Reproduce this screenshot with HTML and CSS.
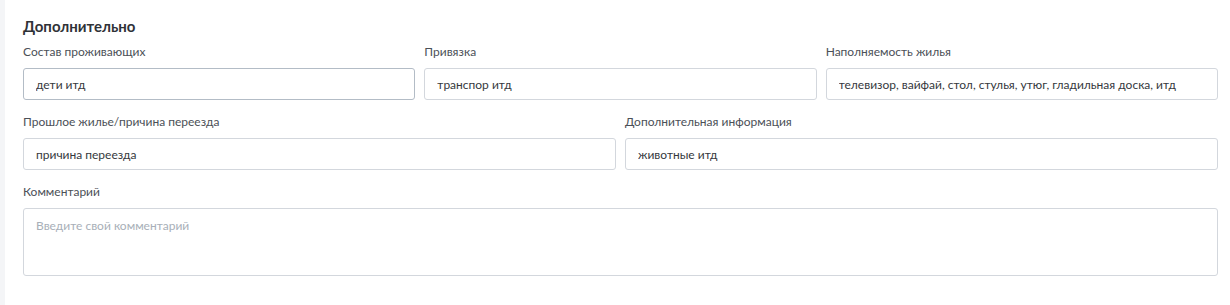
FILE: index.html
```html
<!DOCTYPE html>
<html lang="ru">
<head>
    <meta charset="UTF-8">
    <meta name="viewport" content="width=device-width, initial-scale=1.0">
    <title>Дополнительно</title>
    <link rel="stylesheet" href="styles.css">
</head>
<body>
    <div class="page">
        <section class="panel">
            <h2 class="panel-title">Дополнительно</h2>

            <div class="row row-3">
                <div class="field">
                    <label for="residents">Состав проживающих</label>
                    <input type="text" id="residents" class="control control-active" value="дети итд">
                </div>
                <div class="field">
                    <label for="binding">Привязка</label>
                    <input type="text" id="binding" class="control" value="транспор итд">
                </div>
                <div class="field">
                    <label for="filling">Наполняемость жилья</label>
                    <input type="text" id="filling" class="control" value="телевизор, вайфай, стол, стулья, утюг, гладильная доска, итд">
                </div>
            </div>

            <div class="row row-2">
                <div class="field">
                    <label for="previous">Прошлое жилье/причина переезда</label>
                    <input type="text" id="previous" class="control" value="причина переезда">
                </div>
                <div class="field">
                    <label for="extra">Дополнительная информация</label>
                    <input type="text" id="extra" class="control" value="животные итд">
                </div>
            </div>

            <div class="row">
                <div class="field">
                    <label for="comment">Комментарий</label>
                    <textarea id="comment" class="control control-area" placeholder="Введите свой комментарий"></textarea>
                </div>
            </div>
        </section>
    </div>
</body>
</html>
```

FILE: styles.css
```css
html, body {
    margin: 0;
    padding: 0;
}
body {
    font-family: Lato, "Noto Sans", sans-serif;
    background-color: #f4f5f7;
    color: #333;
}
.page {
    padding-left: 5px;
    min-height: 305px;
}
.panel {
    background-color: #fff;
    min-height: 305px;
    box-sizing: border-box;
    padding: 16px 12px 0 18px;
}
.panel-title {
    margin: 0 0 8px 0;
    font-size: 15px;
    line-height: 20px;
    font-weight: 700;
    color: #2f3237;
}
.row {
    display: grid;
    grid-template-columns: 1fr;
    gap: 9px;
    margin-bottom: 14px;
}
.row-3 {
    grid-template-columns: repeat(3, 1fr);
}
.row-2 {
    grid-template-columns: repeat(2, 1fr);
}
.field {
    display: flex;
    flex-direction: column;
    min-width: 0;
}
.field label {
    font-size: 12px;
    line-height: 16px;
    color: #4b5057;
    margin-bottom: 8px;
}
.control {
    box-sizing: border-box;
    width: 100%;
    height: 32px;
    padding: 0 12px;
    border: 1px solid #d3d7dd;
    border-radius: 3px;
    background: #fff;
    font-family: inherit;
    font-size: 12px;
    color: #35383d;
    outline: none;
}
.control-active {
    border-color: #b3bcc6;
}
.control-area {
    height: 68px;
    padding: 8px 12px;
    resize: none;
    line-height: 18px;
}
.control-area::placeholder {
    color: #a8afb8;
}
```
